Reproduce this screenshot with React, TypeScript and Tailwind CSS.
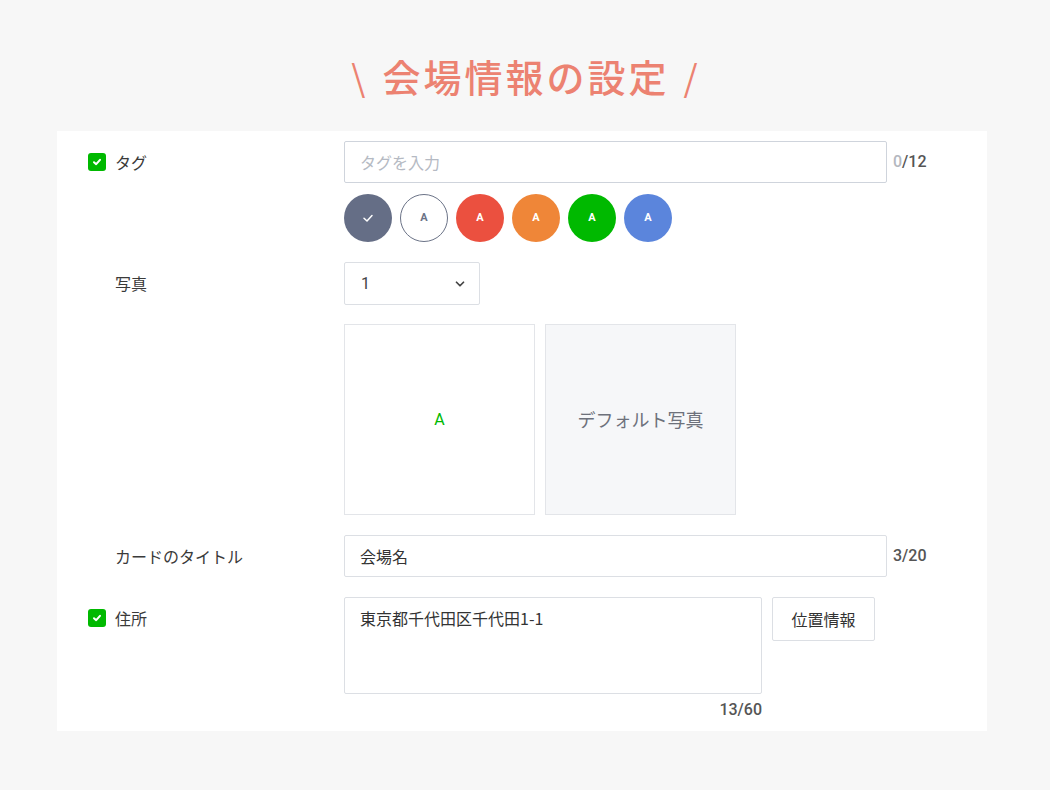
import { ChevronDown } from 'lucide-react'

const jp = { fontFamily: '"Noto Sans CJK JP", "Noto Sans", sans-serif' }

function CheckBox() {
    return (
        <span className="flex h-[18px] w-[18px] items-center justify-center rounded-[3px] bg-[#00b900]">
            <svg width="10" height="10" viewBox="0 0 10 10">
                <path d="M2 5.2 L4.2 7.2 L8 2.8" fill="none" stroke="white" strokeWidth="2" strokeLinecap="round" strokeLinejoin="round" />
            </svg>
        </span>
    )
}

function Label({ checked, children }: { checked?: boolean; children: React.ReactNode }) {
    return (
        <div className="flex h-[42px] w-[256px] shrink-0 items-center gap-[9px]">
            {checked ? <CheckBox /> : <span className="w-[18px]" />}
            <span className="text-[16px] text-[#3a3a3a]">{children}</span>
        </div>
    )
}

function Counter({ value, max }: { value: number; max: number }) {
    return (
        <span className="font-['Roboto'] text-[16px] font-medium text-[#555]">
            <span className={value === 0 ? 'text-[#b4b8bf]' : ''}>{value}</span>/{max}
        </span>
    )
}

const colors = [
    { bg: 'bg-[#656e86]', fg: 'text-white', selected: true },
    { bg: 'bg-white border-[1.5px] border-[#6b7387]', fg: 'text-[#6b7387]' },
    { bg: 'bg-[#eb503f]', fg: 'text-white' },
    { bg: 'bg-[#ef8638]', fg: 'text-white' },
    { bg: 'bg-[#00b900]', fg: 'text-white' },
    { bg: 'bg-[#5b85dc]', fg: 'text-white' },
]

export default function App() {
    return (
        <div className="flex h-[790px] w-[1050px] flex-col bg-[#f7f7f7] pt-[53px]" style={jp}>
            <h1 className="flex items-center justify-center gap-[14px] pl-[2px] text-[38px] font-medium leading-[46px] tracking-[3px] text-[#ec8271]">
                <span className="text-[36px] font-normal">\</span>
                <span>会場情報の設定</span>
                <span className="text-[36px] font-normal">/</span>
            </h1>

            <div className="ml-[57px] mt-[32px] flex h-[600px] w-[930px] flex-col gap-[20px] bg-white pl-[31px] pt-[10px]">
                {/* タグ */}
                <div className="flex">
                    <Label checked>タグ</Label>
                    <div className="flex flex-col gap-[11px]">
                        <div className="flex items-center gap-[6px]">
                            <div className="flex h-[42px] w-[543px] items-center rounded-[2px] border border-[#cfd4dc] px-[15px] text-[16px] text-[#b5bac3]">
                                タグを入力
                            </div>
                            <Counter value={0} max={12} />
                        </div>
                        <div className="flex gap-[8px]">
                            {colors.map((c, i) => (
                                <span key={i} className={`flex h-[48px] w-[48px] items-center justify-center rounded-full ${c.bg}`}>
                                    {c.selected ? (
                                        <svg width="14" height="14" viewBox="0 0 14 14">
                                            <path d="M3 7.2 L6 10 L11 4.5" fill="none" stroke="white" strokeWidth="1.5" strokeLinecap="round" strokeLinejoin="round" />
                                        </svg>
                                    ) : (
                                        <span className={`font-['Roboto'] text-[11px] font-bold ${c.fg}`}>A</span>
                                    )}
                                </span>
                            ))}
                        </div>
                    </div>
                </div>

                {/* 写真 */}
                <div className="flex">
                    <Label>写真</Label>
                    <div className="flex flex-col gap-[19px]">
                        <div className="flex h-[43px] w-[136px] items-center justify-between rounded-[2px] border border-[#dcdfe4] pl-[16px] pr-[12px] font-['Roboto'] text-[16px] text-[#444]">
                            1
                            <ChevronDown size={14} strokeWidth={3} className="text-[#444]" />
                        </div>
                        <div className="flex gap-[10px]">
                            <div className="flex h-[191px] w-[191px] items-center justify-center border border-[#e3e5e9] font-['Roboto'] text-[16px] text-[#00b900]">
                                A
                            </div>
                            <div className="flex h-[191px] w-[191px] items-center justify-center border border-[#e3e5e9] bg-[#f6f7f9] text-[18px] text-[#6d717b]">
                                デフォルト写真
                            </div>
                        </div>
                    </div>
                </div>

                {/* カードのタイトル */}
                <div className="flex">
                    <Label>カードのタイトル</Label>
                    <div className="flex items-center gap-[6px]">
                        <div className="flex h-[42px] w-[543px] items-center rounded-[2px] border border-[#dcdfe4] px-[15px] text-[16px] text-[#333]">
                            会場名
                        </div>
                        <Counter value={3} max={20} />
                    </div>
                </div>

                {/* 住所 */}
                <div className="flex">
                    <Label checked>住所</Label>
                    <div className="flex gap-[10px]">
                        <div className="flex flex-col items-end gap-[4px]">
                            <div className="h-[97px] w-[418px] rounded-[2px] border border-[#dcdfe4] px-[15px] pt-[8px] text-[16px] leading-[24px] text-[#333]">
                                東京都千代田区千代田1-1
                            </div>
                            <Counter value={13} max={60} />
                        </div>
                        <div className="flex h-[44px] w-[103px] items-center justify-center rounded-[2px] border border-[#dcdfe4] text-[16px] text-[#333]">
                            位置情報
                        </div>
                    </div>
                </div>
            </div>
        </div>
    )
}
